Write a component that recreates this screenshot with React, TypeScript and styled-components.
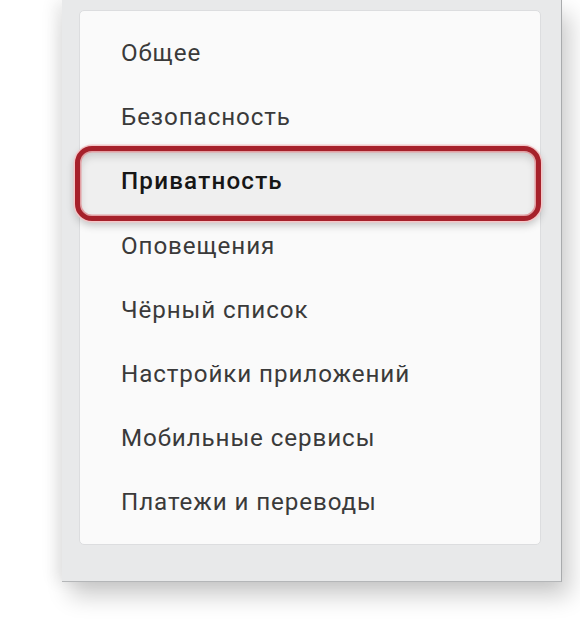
import React from 'react'
import styled, { createGlobalStyle } from 'styled-components'

const GlobalStyle = createGlobalStyle`
  html, body {
    margin: 0;
    padding: 0;
    background: #ffffff;
  }
  body {
    font-family: Roboto, "Noto Sans", "DejaVu Sans", sans-serif;
    width: 580px;
    height: 640px;
    overflow: hidden;
  }
`

// grey frame behind the settings menu
const Frame = styled.div`
  margin-left: 62px;
  width: 500px;
  height: 582px;
  box-sizing: border-box;
  padding: 10px 20px 36px 17px;
  background: #e8e9ea;
  border-right: 1px solid #a9abad;
  border-bottom: 1px solid #b4b6b8;
  box-shadow: 8px 14px 22px rgba(0, 0, 0, 0.2), -8px 0 14px rgba(0, 0, 0, 0.07);
`

const Card = styled.div`
  height: 100%;
  box-sizing: border-box;
  background: #fafafa;
  border: 1px solid #dcdddf;
  border-radius: 5px;
  padding-top: 10px;
`

const Menu = styled.ul`
  list-style: none;
  margin: 0;
  padding: 0;
  display: flex;
  flex-direction: column;
`

const Item = styled.li<{ $active?: boolean }>`
  position: relative;
  height: 64.2px;
  display: flex;
  align-items: center;
  padding-left: 41px;
  font-size: 24.2px;
  letter-spacing: ${(p) => (p.$active ? '1.2px' : '0.9px')};
  color: ${(p) => (p.$active ? '#161616' : '#3a3a3a')};
  font-weight: ${(p) => (p.$active ? 500 : 400)};

  ${(p) =>
    p.$active &&
    `
    &::before {
      content: '';
      position: absolute;
      top: -3px;
      bottom: -7px;
      left: -5px;
      right: -1px;
      border: 5px solid #a6212b;
      border-radius: 17px;
      background: #efefef;
      box-shadow:
        0 0 0 1.5px #f4c6c8,
        0 4px 8px rgba(0, 0, 0, 0.24),
        inset 0 0 0 1.5px #e3a0a4,
        inset 0 5px 8px rgba(0, 0, 0, 0.16);
    }
  `}
`

const Label = styled.span`
  position: relative;
`

const items = [
  'Общее',
  'Безопасность',
  'Приватность',
  'Оповещения',
  'Чёрный список',
  'Настройки приложений',
  'Мобильные сервисы',
  'Платежи и переводы',
]

const App: React.FC = () => {
  return (
    <>
      <GlobalStyle />
      <Frame>
        <Card>
          <Menu>
            {items.map((name) => (
              <Item key={name} $active={name === 'Приватность'}>
                <Label>{name}</Label>
              </Item>
            ))}
          </Menu>
        </Card>
      </Frame>
    </>
  )
}

export default App
